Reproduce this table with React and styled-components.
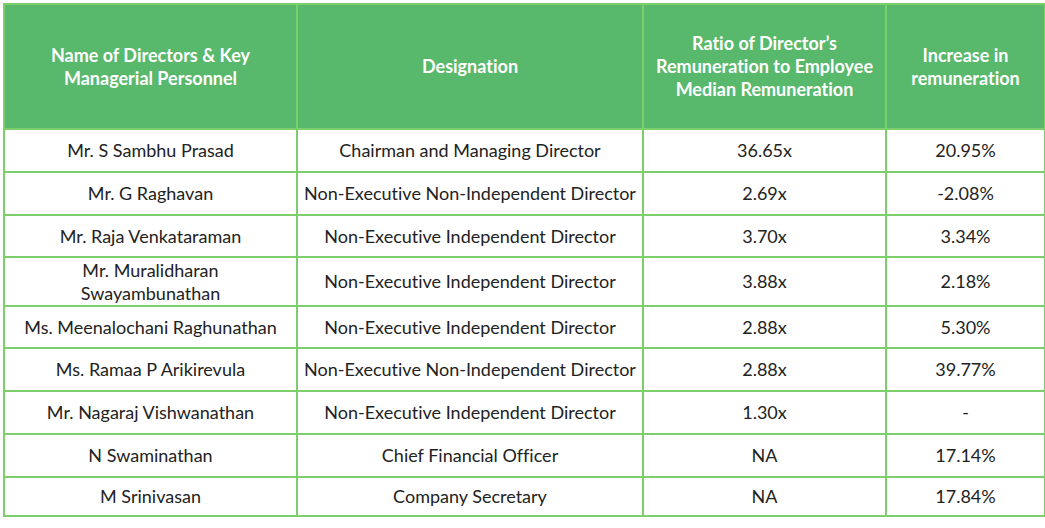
import React from "react";
import styled, { createGlobalStyle } from "styled-components";

const Global = createGlobalStyle`
  html, body { margin: 0; padding: 0; background: #ffffff; }
  body {
    font-family: "Lato", "Open Sans", sans-serif;
    font-variant-ligatures: none;
  }
`;

const Page = styled.div`
  padding: 3px 0 0 3px;
  width: 1041px;
`;

const Table = styled.table`
  border-collapse: collapse;
  table-layout: fixed;
  width: 1041px;
  border: 2px solid #7dcf6c;
`;

const HeadCell = styled.th`
  background: #58b86b;
  color: #ffffff;
  font-weight: 700;
  font-size: 18px;
  line-height: 23px;
  height: 125px;
  padding: 0 10px;
  text-align: center;
  vertical-align: middle;
  border: 2px solid #7dcf6c;
  box-sizing: border-box;
`;

const Row = styled.tr`
  height: ${(p) => p.$h}px;
`;

const Cell = styled.td`
  color: #222222;
  font-size: 18px;
  line-height: 23px;
  padding: 0 4px;
  text-align: center;
  vertical-align: middle;
  white-space: nowrap;
  border: 2px solid #7dcf6c;
`;

const NameCell = styled(Cell)`
  padding: 0 10px;
  white-space: normal;
`;

const cols = [293, 346, 243, 159];

const rows = [
  ["Mr. S Sambhu Prasad", "Chairman and Managing Director", "36.65x", "20.95%", 43],
  ["Mr. G Raghavan", "Non-Executive Non-Independent Director", "2.69x", "-2.08%", 43],
  ["Mr. Raja Venkataraman", "Non-Executive Independent Director", "3.70x", "3.34%", 42],
  ["Mr. Muralidharan Swayambunathan", "Non-Executive Independent Director", "3.88x", "2.18%", 49],
  ["Ms. Meenalochani Raghunathan", "Non-Executive Independent Director", "2.88x", "5.30%", 42],
  ["Ms. Ramaa P Arikirevula", "Non-Executive Non-Independent Director", "2.88x", "39.77%", 43],
  ["Mr. Nagaraj Vishwanathan", "Non-Executive Independent Director", "1.30x", "-", 43],
  ["N Swaminathan", "Chief Financial Officer", "NA", "17.14%", 43],
  ["M Srinivasan", "Company Secretary", "NA", "17.84%", 39],
];

export default function App() {
  return (
    <>
      <Global />
      <Page>
        <Table>
          <colgroup>
            {cols.map((w, i) => (
              <col key={i} style={{ width: w }} />
            ))}
          </colgroup>
          <thead>
            <tr>
              <HeadCell>Name of Directors &amp; Key<br />Managerial Personnel</HeadCell>
              <HeadCell>Designation</HeadCell>
              <HeadCell>Ratio of Director’s<br />Remuneration to Employee<br />Median Remuneration</HeadCell>
              <HeadCell>Increase in<br />remuneration</HeadCell>
            </tr>
          </thead>
          <tbody>
            {rows.map((r, i) => (
              <Row key={i} $h={r[4]}>
                <NameCell>{r[0]}</NameCell>
                <Cell>{r[1]}</Cell>
                <Cell>{r[2]}</Cell>
                <Cell>{r[3]}</Cell>
              </Row>
            ))}
          </tbody>
        </Table>
      </Page>
    </>
  );
}
